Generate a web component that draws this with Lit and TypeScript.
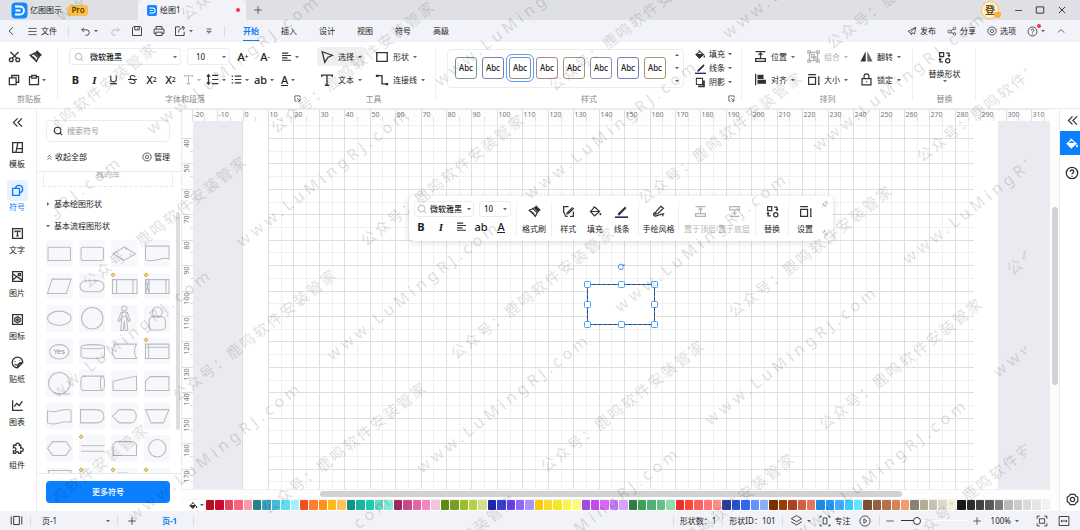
import { LitElement, html, svg, css, TemplateResult, SVGTemplateResult } from "lit";
import { customElement, property } from "lit/decorators.js";
import { classMap } from "lit/directives/class-map.js";
import { styleMap } from "lit/directives/style-map.js";

/* ---------- icons (16 x 16 box, stroked with currentColor) ---------- */
const ICONS: Record<string, SVGTemplateResult> = {
  back: svg`<path d="M10.500 3 5.500 8l5 5"/>`,
  up: svg`<path d="M3 10.500 8 5.500l5 5"/>`,
  menu: svg`<path d="M2 3.500h12M2 8h12M2 12.500h12"/>`,
  undo: svg`<path d="M5.500 2.500 2.500 5.500l3 3M2.500 5.500h7a4 4 0 0 1 0 8H8"/>`,
  redo: svg`<path d="m10.500 2.500 3 3-3 3M13.500 5.500h-7a4 4 0 0 0 0 8H8"/>`,
  save: svg`<path d="M2 3.500 3.500 2h9L14 3.500V14H2zM5 2v4.500h6V2M9 3.500v1.500"/>`,
  print: svg`<path d="M4 5.500V2h8v3.500M4 11.500H1.500v-6h13v6H12M4 9.500h8V14H4z"/>`,
  export: svg`<path d="M8 2.500H2V14h11.500V9M6 10c0-4 3-6 7-6.500M10.500 1.500 14 3.500l-2 3.200"/>`,
  more: svg`<path d="M3 4h10"/><path d="m4 8.500 4 4 4-4z"/>`,
  publish: svg`<path d="M14 2 1.500 8.500l3.500 2L14 2l-2 11-4-2.500L6.500 14l-.5-3"/>`,
  share: svg`<circle cx="4" cy="9" r="2.500"/><circle cx="12" cy="4" r="2"/><circle cx="12" cy="12.500" r="2"/><path d="m6.300 7.500 4-2.500M6.300 10.300l3.700 1.500"/>`,
  gear: svg`<path d="M5.200 1.800h5.600l1.200 1.800 2.500 1.400v5.600l-2.300 1.600-1.400 2H5.200l-1.300-2-2.400-1.600V5l2.400-1.400z"/><circle cx="8" cy="8" r="2.600"/>`,
  help: svg`<circle cx="8" cy="8" r="6.500"/><path d="M6 6.500c0-2.600 4-2.600 4 0 0 1.500-2 1.500-2 3M8 11v1.300"/>`,
  plus: svg`<path d="M8 2v12M2 8h12"/>`,
  minus: svg`<path d="M2 8h12"/>`,
  close: svg`<path d="m3 3 10 10M13 3 3 13"/>`,
  max: svg`<path d="M2 3h12v10H2z"/>`,
  cut: svg`<circle cx="4" cy="12" r="2.300"/><circle cx="12" cy="12" r="2.300"/><path d="M3 2.500 10.800 10M13 2.500 5.200 10"/>`,
  brush: svg`<path d="M10 1.500 14.500 6l-3 1-2.500-2.500z" fill="currentColor"/><path d="M1.500 6.500 6 4.500l5.500 5L9 14c-1.500-2-5-5-7.500-7.500zM6 4.500l3-1.500 4.500 4-2 2.500"/><path d="m4 8 4 3.500"/>`,
  copy: svg`<path d="M1.800 5.200h9v9h-9zM5 5V2h9.200v9H11"/>`,
  paste: svg`<path d="M5 3.500H2v10.700h12V3.500h-3M5 2h6v3.500H5z"/>`,
  search: svg`<circle cx="7.300" cy="7.300" r="5.300"/><path d="m11.300 11.300 3.200 3.200"/>`,
  underline: svg`<path d="M4 2v5.500a4 4 0 0 0 8 0V2M3 14h10"/>`,
  strike: svg`<path d="M12 4.500C11 1.500 4.500 1.500 4.500 5c0 4 7.500 2 7.500 6 0 4-7.500 3.500-8.300.3M1.500 8h13"/>`,
  align: svg`<path d="M1.500 3h9M1.500 6.500h13M1.500 10h8M1.500 13.500h13"/>`,
  spacing: svg`<path d="M3 2v12M1 4.500 3 2l2 2.500M1 11.500 3 14l2-2.500M7.500 3H15M7.500 8H15M7.500 13H15"/>`,
  list: svg`<path d="M1 3h2M1 8h2M1 13h2M5.500 3H15M5.500 8H15M5.500 13H15"/>`,
  select: svg`<path d="M2.500 2 14 6 9 8.500 5.500 14z"/>`,
  type: svg`<path d="M2 4.500V2.500h12v2M8 2.500v11.500M5.500 14h5"/>`,
  rect: svg`<path d="M2 3h12v10H2z"/>`,
  connector: svg`<path d="M3 3h5v9.500h5"/><path d="M1 2h3v2.500H1zM12 11.500h3V14h-3z" fill="currentColor" stroke="none"/>`,
  bucket: svg`<path d="M5.500 2 12 8l-5.500 5L1.500 8 7.500 3"/><path d="M2 8h10l-5.500 5z" fill="currentColor"/><path d="M13.500 9.500v3" stroke-width="2"/>`,
  bucketLine: svg`<path d="M6 1.500v2L1.800 8l5 5.500L13 8 7 2.500M2 8h10"/><path d="M14 10v2.500" stroke-width="2"/>`,
  pen: svg`<path d="M4 11 13 2.500M3.500 11.500l1.500.5 8.500-8.500"/><path d="M0 15h16" stroke="#232c6b" stroke-width="2"/>`,
  shadow: svg`<path d="M2 2h9v9H2z"/><path d="M13 5v8.500H4.500" stroke-width="2.600"/>`,
  position: svg`<path d="M2 2h12M8 4v6M5.500 6 8 3.800 10.500 6M2 10.500h12V14H2z"/>`,
  toBottom: svg`<path d="M2 2h12v4H2zM8 6v5M5.500 9 8 11.500 10.500 9M2 14h12"/>`,
  alignLeft: svg`<path d="M2 1v14"/><path d="M5 3h6v3.500H5zM5 9h9v3.500H5z" fill="currentColor"/>`,
  group: svg`<path d="M3 3h10v10H3z"/><path d="M1 1h3v3H1zM12 1h3v3h-3zM1 12h3v3H1zM12 12h3v3h-3z"/><path d="M5.500 5.500h3.500V9H5.500zM8 8h3v3H8z"/>`,
  size: svg`<path d="M2 5.500h8.500V14H2zM1.500 2h9.500M13.500 5h2M13.500 14h2M14.500 5v9"/>`,
  flip: svg`<path d="M7 1.500V14H.500z" fill="currentColor" stroke="none"/><path d="M9 1.500V14h6.500z" fill="currentColor" fill-opacity=".75" stroke="none"/>`,
  lock: svg`<path d="M2.500 7h11v7.500h-11zM5 7V4a3 3 0 0 1 6 0v3M8 10v1.500"/>`,
  replace: svg`<path d="M2 2h5v5H2z"/><circle cx="12" cy="12" r="2.600"/><path d="M10 2.500h3.500V6M12 5l1.500 1.500L15 5M6 13.500H2.500V10M4 11 2.500 9.500 1 11"/>`,
  collapse: svg`<path d="M8 3 3 8l5 5M13.500 3l-5 5 5 5"/>`,
  foldUp: svg`<path d="m3.500 7.500 4.500-4.500 4.500 4.500M3.500 13 8 8.500l4.500 4.500"/>`,
  template: svg`<path d="M2 2h12v12H2zM8.500 2 6 14M7 9.500h7"/>`,
  symbol: svg`<path d="M2 5.500h8.500V14H2z"/><path d="M5.500 5a4.500 4.500 0 1 1 5.500 5.500"/>`,
  text: svg`<path d="M2 2h12v12H2z"/><path d="M5 6.500V5h6v1.500M8 5v6M6.500 11h3"/>`,
  image: svg`<path d="M2 2h12v12H2zM2.500 5 13.500 12.500M2.500 12l4-3.500"/><path d="M9 4.500h2.500V7H9z"/>`,
  iconset: svg`<path d="M2 2h12v12H2z"/><path d="m8 4.500 3.300 2v3.500L8 12l-3.300-2V6.500z"/><circle cx="8" cy="8.200" r="1"/>`,
  sticker: svg`<path d="M14.500 8A6.500 6.500 0 1 0 8 14.500zM14.500 8c-4 0-6.500 2-6.500 6.500M5 6.500v.8M10.500 5.500v.8M4.500 10c1 1 2 1 3 .8"/>`,
  chart: svg`<path d="M2 1.500V14h12.500M4 9.500 7 5.500l3 2.500 4-5"/>`,
  puzzle: svg`<path d="M3 4h3a2.200 2.200 0 1 1 4.300 0H12v3.500a2.200 2.200 0 1 1 0 4V14H9.500a2 2 0 0 0-4 0H3v-3a2.200 2.200 0 1 0 0-4z"/>`,
  styleEdit: svg`<path d="M8 2H2v7c2 0 1 5 3 5h2M13 3 6.500 9.500 6 11l2-.5L14.500 4M14 8v6h-4"/>`,
  sketch: svg`<path d="M11 1.500 14 4 7.500 10.500l-3.500 1 1-3.500zM3.500 9C1 11 1.500 14 5 13.500c3-.5 6-2.500 9-2.500-1 1-1 2-.5 3"/>`,
  pin: svg`<path d="M9.500 2 14 6.500l-1.500.5-3 3-.5 3L3.500 7.500l3-.5 3-3zM6 10.500 2 14.500"/>`,
  shrink: svg`<path d="M7 1.500V6H2.500M9.500 14.500V10H14"/>`,
  launcher: svg`<path d="M14 6V2H2v12h4M7 7l6.500 6.500M13.500 8v6H8"/>`,
  layers: svg`<path d="m8 2 6.500 3.800L8 9.500 1.500 5.800zM1.500 9.500 8 13.500l6.500-4"/>`,
  focus: svg`<path d="M1.500 4V1.500H4M12 1.500h2.500V4M14.500 12v2.500H12M4 14.500H1.500V12M5.500 4h5v8h-5z"/>`,
  play: svg`<circle cx="8" cy="8" r="6.800"/><path d="m6.500 5 4 3-4 3z"/>`,
  fit: svg`<path d="M1.500 5V1.500H5M11 1.500h3.500V5M14.500 11v3.500H11M5 14.500H1.500V11M4.500 5h7v6h-7z"/>`,
  width: svg`<path d="M1.500 2h13v12h-13zM4 8h8M5.500 6.500 4 8l1.500 1.500M10.500 6.500 12 8l-1.500 1.500"/>`,
  pages: svg`<path d="M4.500 3h7v10h-7zM1.500 3v10M14.500 3v10"/>`,
  rotate: svg`<path d="M13 9.500A5.300 5.300 0 1 1 12.500 5M14 2v4h-4"/>`,
};

const icon = (name: string, size = 12, weight = 1.5) => html`<svg class="icon" width=${size} height=${size}
  viewBox="0 0 16 16" fill="none" stroke="currentColor" stroke-width=${weight} aria-hidden="true">${ICONS[name]}</svg>`;
const caret = () => html`<svg class="caret" width="4" height="4" viewBox="0 0 4 4" aria-hidden="true"><path d="M0 1h4L2 3.200z" fill="currentColor"/></svg>`;

/* ---------- data ---------- */
const SWATCHES = (
  "b01020 cc0a2f ea4560 f7647d f99bab 28808f 38a3bd 42bfdf 60dcf0 a3f0ff f24f21 ff7f32 ff931a ffb916 ffc35a " +
  "129280 17b59c 1cccb2 66d9c8 84ecda 9c2a5c c74a8a e465a8 fa83c5 f2c3de 5f8a12 76a024 9abf22 b5d144 d0e08e " +
  "2028a8 3a40d5 6c42f0 9168fb ab92fa fbc900 fadb2c efe926 faf54a fbfb80 9b4ddb c24cea d568f5 c77dfb daa2ff " +
  "2e7d43 3aa254 50b075 64bf88 92d9ab e8322b ff4438 fb5f60 ff7575 ff8b83 2a41a0 2d52cc 3367f0 6590ff 86aff7 " +
  "7c3000 9a3d00 ab4225 d06040 e47558 1a8cdd 2597f5 40acff 38cbfd 66e4ff 7c4e36 965e42 b5704d d6835b f59a6c " +
  "8b8276 b3ad98 c5c3b0 dddac8 f3eedb 191919 2d2d2d 424242 585858 7b7b7b bababa cbcbcb dadada e6e6e6 f2f2f2"
).split(" ");

const PRESETS = ["#6f9a94", "#7583ab", "#8a8a94", "#a9868c", "#a3967a", "#8791ab", "#7c7fae", "#a8916c"];

const NAV: [string, string][] = [
  ["template", "模板"], ["symbol", "符号"], ["text", "文字"], ["image", "图片"],
  ["iconset", "图标"], ["sticker", "贴纸"], ["chart", "图表"], ["puzzle", "组件"],
];

interface Shape { art: SVGTemplateResult; mark?: boolean; name: string; }
const SHAPES: Shape[] = [
  { name: "流程", art: svg`<path d="M2 7h22v13H2z"/>` },
  { name: "替代流程", art: svg`<rect x="2" y="7" width="22" height="13" rx="2"/>` },
  { name: "判定", art: svg`<path d="M2 13.500 13 7l11 6.500L13 20z"/>` },
  { name: "文档", art: svg`<path d="M1.500 6h23v12.500c-8-3-13 4.500-23 1z"/>` },
  { name: "数据", art: svg`<path d="M6 6h18.500L20 20H1.500z"/>` },
  { name: "终结符", art: svg`<rect x="1" y="7.500" width="23.500" height="11" rx="5.500"/>` },
  { name: "子流程", mark: true, art: svg`<path d="M1.500 6.500h24V20h-24zM5.500 6.500V20M21.500 6.500V20"/>` },
  { name: "外部流程", mark: true, art: svg`<path d="M1.500 6.500h23V20h-23zM5 6.500V20M21.500 6.500V20M1.500 6.500 5 20M5 6.500 1.500 20"/>` },
  { name: "椭圆", art: svg`<ellipse cx="13" cy="13" rx="11.500" ry="7"/>` },
  { name: "圆", art: svg`<circle cx="13" cy="13" r="10.500"/>` },
  { name: "人员", art: svg`<circle cx="13" cy="3.500" r="2.500"/><path d="M10 7h6l3 8.500-1.500.5-2.300-5 1.300 14h-2.500L13 16l-1 9H9.500l1.300-14-2.300 5-1.500-.5zM11 7v4.500h4V7"/>` },
  { name: "用户", art: svg`<circle cx="13" cy="7" r="5"/><rect x="5" y="11.500" width="16" height="13" rx="4"/>` },
  { name: "是", art: svg`<ellipse cx="13" cy="13.500" rx="9.500" ry="7"/><text x="13" y="16" class="yes">Yes</text>` },
  { name: "数据库", art: svg`<path d="M2 8.500v9c0 3.500 23 3.500 23 0v-9"/><ellipse cx="13.500" cy="8.500" rx="11.500" ry="2"/>` },
  { name: "存储数据", art: svg`<path d="M4 6h21c-2.500 4-2.500 10 0 14H4C.500 16 .500 10 4 6z"/>` },
  { name: "内部存储", mark: true, art: svg`<path d="M1.500 6h23v14h-23zM1.500 9h23M4.500 6v14"/>` },
  { name: "顺序数据", art: svg`<circle cx="13" cy="13" r="10.500"/><path d="M13 23.500h10.500"/>` },
  { name: "直接数据", art: svg`<path d="M23 6H4c-3 0-3 14 0 14h19"/><ellipse cx="23" cy="13" rx="2" ry="7"/>` },
  { name: "手动输入", art: svg`<path d="M2 11 25 6v14H2z"/>` },
  { name: "卡片", art: svg`<path d="M6 6.500h18.500V20h-23v-9z"/>` },
  { name: "纸带", art: svg`<path d="M1.500 7.500c8 4 14-3.500 23-.5v12c-9-3-15 4.500-23 .5z"/>` },
  { name: "延迟", art: svg`<path d="M1.500 6.500H17c10 0 10 13 0 13H1.500z"/>` },
  { name: "显示", art: svg`<path d="M8 6.500h11.500c7 0 7 13 0 13H8L1.500 13z"/>` },
  { name: "手动操作", art: svg`<path d="M1.500 6.500h23L19 19.500H7z"/>` },
  { name: "准备", art: svg`<path d="M6.500 6.500h13L24.500 13l-5 7h-13l-5-7z"/>` },
  { name: "并行模式", mark: true, art: svg`<path d="M2 10.500h23M2 16h23"/>` },
  { name: "循环限值", art: svg`<path d="M5 6.500h17l3 3V20H2V9.500z"/>` },
  { name: "连接", art: svg`<circle cx="13" cy="13" r="8.500"/>` },
  { name: "页面引用", art: svg`<path d="M2.500 2.500h22V20h-22z"/>` },
  { name: "箭头", mark: true, art: svg`<path d="M6 8h14"/>` },
  { name: "批注", mark: true, art: svg`<path d="M7 5h9M11 8h8"/>` },
  { name: "注释", mark: true, art: svg`<path d="M6 8h12"/>` },
];

/* ---------- drawing canvas with rulers ---------- */
const STEP = 25.44;
const ORIGIN = 62;
const FIRST_ROW = 29.4;

@customElement("draw-canvas")
export class DrawCanvas extends LitElement {
  static styles = css`
    :host { display: block; overflow: hidden; background: #fdfdfd; }
    .surface { display: block; width: 100%; height: 100%; }
    .num { font: 7px "Noto Sans", "Noto Sans CJK SC", sans-serif; fill: #777; }
    .tick, .grid { shape-rendering: crispEdges; stroke-width: 1; }
    .tick { stroke: #dedede; }
    .minor { stroke: #f0f0f0; }
    .major { stroke: #dfdfdf; }
  `;

  private snap(v: number) { return Math.round(v - 0.5) + 0.5; }

  private gridLines() {
    const left = ORIGIN + STEP, right = 793, out: SVGTemplateResult[] = [];
    for (const major of [false, true]) {
      const cls = major ? "grid major" : "grid minor";
      const shift = major ? 0 : STEP / 2;
      for (let i = 0; i < 28; i++) {
        const x = this.snap(left + i * STEP + shift);
        if (x <= right) out.push(svg`<line class=${cls} x1=${x} x2=${x} y1="12" y2="380"/>`);
      }
      for (let i = -1; i < 14; i++) {
        const y = this.snap(FIRST_ROW + i * STEP + shift);
        if (y > 12) out.push(svg`<line class=${cls} x1=${left} x2=${right} y1=${y} y2=${y}/>`);
      }
    }
    return out;
  }

  private rulers() {
    const out: SVGTemplateResult[] = [];
    for (let n = -20; n <= 310; n += 10) {
      const x = ORIGIN + (n / 10) * STEP, a = this.snap(x), b = this.snap(x + STEP / 2);
      out.push(svg`<line class="tick" x1=${a} x2=${a} y1="1" y2="12"/><line class="tick" x1=${b} x2=${b} y1="8" y2="12"/>
        <text class="num" x=${a + 1} y="8">${n}</text>`);
    }
    for (let n = 40; n <= 170; n += 10) {
      const y = FIRST_ROW + ((n - 40) / 10) * STEP, a = this.snap(y), b = this.snap(y + STEP / 2);
      const half = n > 90 ? 6 : 4;
      out.push(svg`<line class="tick" x1="1" x2="12" y1=${a} y2=${a}/><line class="tick" x1="9" x2="12" y1=${b} y2=${b}/>
        <text class="num" text-anchor="middle" transform="translate(8 ${a + half + 1}) rotate(-90)">${n}</text>`);
    }
    return out;
  }

  private selection() {
    const x0 = 406.5, x1 = 473.5, y0 = 175.5, y1 = 215.5, mx = 440.5, my = 195.5;
    const pts = [[x0, y0], [mx, y0], [x1, y0], [x0, my], [x1, my], [x0, y1], [mx, y1], [x1, y1]];
    return svg`
      <rect x=${x0} y=${y0} width=${x1 - x0} height=${y1 - y0} fill="#fff" stroke="#2e86e8"/>
      <rect x=${x0} y=${y0} width=${x1 - x0} height=${y1 - y0} fill="none" stroke="#33405c" stroke-dasharray="3 2"/>
      <g transform="translate(436 154) scale(.5)" fill="none" stroke="#2b8cf5" stroke-width="2">${ICONS.rotate}</g>
      ${pts.map(([x, y]) => svg`<rect x=${x - 3} y=${y - 3} width="6" height="6" rx="1" fill="#fff" stroke="#4a9ff9"/>`)}`;
  }

  render() {
    return html`<svg class="surface" role="img" aria-label="绘图1">
      <rect x="12" y="12" width="100%" height="100%" fill="#ebeaf0"/>
      <rect x=${ORIGIN} y="12" width="755" height="100%" fill="#fff"/>
      <path d="M61.500 12v368" stroke="#dddde4"/>
      ${this.gridLines()}
      <path d="M0 0h870v12H0z" fill="#fdfdfd"/>
      ${this.rulers()}
      <path d="M0 .5h870M.5 0v400" stroke="#ececec"/>
      ${this.selection()}
    </svg>`;
  }
}

/* ---------- diagonal watermark ---------- */
@customElement("water-mark")
export class WaterMark extends LitElement {
  static styles = css`
    :host { display: block; pointer-events: none; overflow: hidden; }
    .sheet { display: block; width: 100%; height: 100%; }
    .latin, .han { fill: #000; fill-opacity: 0.12; font-family: "Noto Sans", "Noto Sans CJK SC", sans-serif; font-weight: 500; }
    .latin { font-size: 16px; letter-spacing: 4px; }
    .han { font-size: 15px; letter-spacing: 2px; }
  `;
  private row(cls: string, text: string, x: number, y: number, bx: number, by: number) {
    const out: SVGTemplateResult[] = [];
    for (let i = -2; i < 5; i++) for (let j = -3; j < 8; j++) {
      const px = Math.round(x + i * bx + j * 90), py = Math.round(y + i * by + j * 113);
      if (px > -150 && px < 965 && py > 10 && py < 640)
        out.push(svg`<text class=${cls} transform="translate(${px} ${py}) rotate(-38)">${text}</text>`);
    }
    return out;
  }
  render() {
    return html`<svg class="sheet" aria-hidden="true">
      ${this.row("latin", "www.LuMingRJ.com", 188, 248, 288, -48)}
      ${this.row("han", "公众号：鹿鸣软件安装管家", 222, 134, 278, -42)}
    </svg>`;
  }
}

/* ---------- symbol tile ---------- */
@customElement("symbol-tile")
export class SymbolTile extends LitElement {
  @property({ attribute: false }) shape!: Shape;
  static styles = css`
    :host { display: block; aspect-ratio: 1; }
    .tile { display: block; width: 100%; height: 100%; padding: 0; border: 0; border-radius: 3px; background: #f7f8fb; }
    .art { display: block; width: 100%; height: 100%; overflow: visible; fill: none; stroke: #b9bbc0; stroke-width: 1; }
    .yes { font: 7px "Noto Sans", sans-serif; fill: #8b8e94; stroke: none; text-anchor: middle; }
  `;
  render() {
    return html`<button class="tile" aria-label=${this.shape.name}>
      <svg class="art" viewBox="0 0 26 26">${this.shape.art}
        ${this.shape.mark ? svg`<path d="m2-.200 2 2-2 2-2-2z" fill="#ffd84d" stroke="#a8923c" stroke-width=".7"/>` : ""}
      </svg></button>`;
  }
}

/* ---------- application ---------- */
@customElement("app-root")
export class AppRoot extends LitElement {
  static styles = css`
    :host {
      position: relative; display: flex; flex-direction: column; height: 100vh; overflow: hidden;
      font: 8px/10px "Noto Sans", "Noto Sans CJK SC", sans-serif; color: #222; background: #fff;
    }
    * { box-sizing: border-box; }
    button, select, input { font: inherit; color: inherit; margin: 0; padding: 0; border: 0; background: none; outline: 0; }
    button { display: inline-flex; align-items: center; justify-content: center; white-space: nowrap; }
    select { appearance: none; }
    a { color: inherit; text-decoration: none; }
    svg { flex: none; display: block; }
    .icon { color: #333; }
    .caret { color: #666; }
    .off, .off .icon, .off .caret { color: #b5b5b5; }
    .sep { flex: none; width: 1px; height: 11px; background: #dcdde2; }
    .grow { flex: 1; }

    .title { flex: none; display: flex; height: 20px; background: #dfe0e5; padding-left: 11px; align-items: center; }
    .name { font-size: 8px; margin: 0 6px 0 2px; }
    .pro { width: 20px; height: 11px; border-radius: 3px; background: #fcbf43; font-weight: 600; color: #5b3b06; text-align: center; }
    .doc { align-self: stretch; display: flex; align-items: center; gap: 3px; width: 108px; margin-left: 50px; padding: 0 6px 0 9px; background: #f2f3f8; border-radius: 4px 4px 0 0; }
    .dot { width: 4px; height: 4px; border-radius: 50%; background: #f5363f; }
    .newtab { width: 24px; }
    .avatar { position: relative; width: 18px; height: 18px; border-radius: 50%; background: #fff3cf; border: 1px solid #f3c666; color: #6b4a12; font-size: 10px; font-weight: 700; margin-right: 8px; }
    .gem { position: absolute; right: -3px; bottom: 0; width: 7px; height: 6px; background: #fbb03b; border-radius: 1px 1px 4px 4px; }
    .win { width: 22px; }
    .wins { display: flex; margin-right: 7px; }

    .menu { flex: none; display: flex; align-items: center; height: 22px; background: #f2f3f8; padding: 0 14px 0 5px; }
    .file { gap: 3px; margin: 0 11px 0 10px; }
    .quick { display: flex; align-items: center; height: 100%; padding-left: 11px; }
    .quick button { width: 22px; }
    .quick .wide { width: 24px; justify-content: flex-start; gap: 3px; }
    .quick .out { margin-left: 4px; }
    .after { margin-left: 4px; }
    .tabs { display: flex; gap: 22px; margin-left: 18px; align-self: stretch; }
    .tab { position: relative; display: flex; align-items: center; }
    .tab.on { color: #0a7cff; font-weight: 700; }
    .tab.on::after { content: ""; position: absolute; left: 0; right: 0; bottom: 1px; height: 1px; background: #0a7cff; }
    .side { display: flex; align-items: center; gap: 11px; }
    .side button { gap: 3px; }
    .alert { position: relative; }
    .alert::after { content: ""; position: absolute; left: 10px; top: -2px; width: 4px; height: 4px; border-radius: 50%; background: #f5363f; }

    .ribbon { flex: none; display: flex; height: 67px; border-bottom: 1px solid #ededf0; background: #fff; }
    .group { position: relative; display: grid; grid-template-rows: 19px 19px 11px; row-gap: 4px; padding-top: 5px; align-content: start; }
    .group::after { content: ""; position: absolute; right: 0; top: 6px; bottom: 8px; width: 1px; background: #efeff2; }
    .group.plain::after { display: none; }
    .row { display: flex; align-items: center; }
    .caption { display: grid; grid-template-columns: 1fr auto 1fr; align-items: center; color: #8a8a8a; }
    .caption .txt { grid-column: 2; }
    .caption button { justify-self: end; }
    .clip { width: 58px; }
    .clip .row { padding-left: 8px; gap: 8px; }
    .clip button { gap: 2px; }
    .font { width: 253px; }
    .font .row { padding-left: 8px; }
    .font .row.boxes { padding-left: 11px; }
    .font .caption { padding: 0 10px 0 11px; }
    .b19 { width: 19px; height: 19px; }
    .b22 { width: 22px; height: 19px; }
    .b24 { width: 24px; height: 19px; gap: 3px; }
    .gapleft { margin-left: 2px; }
    .glyph { font-size: 11px; line-height: 14px; color: #222; font-weight: 500; }
    .bold { font-weight: 700; }
    .ital { font-family: "Liberation Serif", serif; font-style: italic; font-weight: 700; }
    .sub { font-size: 7px; }
    .under { border-bottom: 1px solid #222; line-height: 11px; }
    .field { position: relative; display: flex; align-items: center; height: 17px; border: 1px solid #ececef; border-radius: 3px; padding: 0 3px; gap: 4px; background: #fff; }
    .field select { flex: 1; min-width: 0; height: 100%; }
    .field .icon { color: #999; }
    .f112 { width: 112px; margin-right: 6px; padding-left: 4px; gap: 6px; font-weight: 500; }
    .f43 { width: 43px; padding-left: 8px; }

    .tb { height: 19px; padding: 0 3px; gap: 4px; border-radius: 3px; justify-content: flex-start; }
    .tb.on { background: #efeff0; }
    .tools { width: 125px; }
    .tools .row { padding-left: 6px; gap: 7px; }
    .style { width: 306px; grid-template-rows: 42px 11px; }
    .stylebody { display: flex; padding-left: 11px; align-items: center; }
    .gallery { display: flex; align-items: center; gap: 5px; width: 237px; height: 39px; border: 1px solid #ececef; border-radius: 4px; padding: 0 4px 0 7px; }
    .preset { width: 22px; height: 22px; border: 1px solid; border-radius: 3px; color: #222; background: #fff; font-weight: 500; }
    .preset.on { outline: 1px solid #4da3ff; outline-offset: 2px; }
    .updown { display: flex; flex-direction: column; gap: 9px; margin-left: auto; }
    .flipped { transform: rotate(180deg); }
    .inks { display: flex; flex-direction: column; margin-left: 11px; }
    .inks button { height: 14px; gap: 3px; }
    .style .caption { padding-right: 7px; padding-left: 7px; }
    .arrange { width: 171px; }
    .arrange .row { display: grid; grid-template-columns: 53px 53px 52px; padding-left: 9px; }
    .swap { width: 63px; grid-template-rows: 42px 11px; }
    .swapbtn { flex-direction: column; gap: 5px; padding-top: 4px; justify-content: flex-start; }
    .swapbtn .caret { margin-top: -5px; }

    .body { flex: 1; min-height: 0; display: flex; }
    .nav { flex: none; width: 37px; border-right: 1px solid #ececef; display: flex; flex-direction: column; padding-right: 2px; }
    .fold { height: 26px; margin-bottom: 2px; }
    .navitem { flex-direction: column; gap: 1px; margin-bottom: 11px; }
    .navicon { display: flex; align-items: center; justify-content: center; width: 21px; height: 21px; border-radius: 3px; }
    .navitem.on { color: #0a7cff; }
    .navitem.on .icon { color: #0a7cff; }
    .navitem.on .navicon { background: #e6f2ff; }

    .panel { flex: none; width: 144px; display: flex; flex-direction: column; }
    .find { display: flex; align-items: center; gap: 4px; height: 22px; margin: 11px 11px 0 9px; padding: 0 6px; border: 1px solid #ececef; border-radius: 4px; }
    .find input { flex: 1; min-width: 0; }
    .find input::placeholder { color: #999; opacity: 1; }
    .bar { display: flex; justify-content: space-between; height: 30px; padding: 0 11px 0 9px; border-bottom: 1px solid #e9e9ec; }
    .bar button { gap: 2px; padding-top: 1px; }
    .list { position: relative; flex: 1; min-height: 0; overflow: hidden; padding: 0 11px 0 9px; }
    .mine { height: 15px; margin: 0 -3px; border: 1px dashed #e6e6e9; border-top: 0; color: #aaa; text-align: center; line-height: 4px; }
    .cat { display: flex; width: 100%; justify-content: flex-start; gap: 4px; height: 22px; }
    .cats { padding-top: 6px; }
    .right { transform: rotate(-90deg); }
    .tiles { display: grid; grid-template-columns: repeat(4, 1fr); gap: 6px; padding-top: 3px; }
    .thumb { position: absolute; right: 1px; top: 40px; width: 4px; height: 218px; border-radius: 2px; background: #dcdde0; }
    .foot { border-top: 1px solid #e9e9ec; padding: 7px 11px 8px 9px; }
    .primary { width: 100%; height: 22px; border-radius: 4px; background: #0a80ff; color: #fff; font-weight: 500; }

    .stage { flex: 1; min-width: 0; display: grid; grid-template: 1fr 10px 12px / 1fr 10px; position: relative; }
    .vbar { position: relative; background: #fdfdfd; border-right: 1px solid #ececef; grid-row: 1 / 4; grid-column: 2; }
    .vthumb { position: absolute; left: 2px; top: 98px; height: 178px; width: 6px; border-radius: 3px; background: #d0d2d4; }
    .hbar { border-top: 1px solid #f0f0f0; position: relative; background: #fdfdfd; }
    .hthumb { position: absolute; left: 16%; width: 67%; top: 1px; height: 6px; border-radius: 3px; background: #d0d2d4; }
    .colors { display: flex; align-items: flex-start; gap: 1px; padding-left: 8px; border-top: 1px solid #f2f2f2; }
    .colors .pick { width: 16px; height: 10px; gap: 2px; justify-content: flex-start; }
    .swatch { flex: 1; height: 10px; border-radius: 1px; }

    .float { position: absolute; left: 228px; top: 87px; display: flex; width: 424px; height: 45px; border-radius: 5px; background: #fff; box-shadow: 0 1px 6px rgba(0, 0, 0, 0.16); }
    .fleft { width: 107px; padding: 5px 0 0 5px; }
    .fboxes { display: flex; gap: 5px; height: 16px; }
    .fboxes .field { height: 16px; gap: 3px; padding: 0 2px; font-weight: 500; }
    .fboxes .f32 { padding-left: 4px; padding-right: 3px; }
    .f60 { width: 60px; }
    .f32 { width: 32px; }
    .fmarks { display: flex; margin-left: -3px; }
    .fmarks button { width: 20px; height: 19px; }
    .fcell { display: flex; justify-content: center; border-left: 1px solid #f0f0f2; height: 34px; margin-top: 6px; }
    .fcell button { flex: 1; flex-direction: column; gap: 6px; justify-content: flex-start; padding-top: 3px; }
    .w35 { width: 35px; } .w87 { width: 87px; padding: 0 3px; } .w40 { width: 40px; } .w77 { width: 77px; padding: 0 4px; } .w33 { width: 33px; }
    .ftail { flex: 1; display: flex; flex-direction: column; justify-content: space-between; align-items: center; padding: 4px 4px 4px 0; }
    .ftail .icon { color: #999; }

    .rail { flex: none; width: 20px; display: flex; flex-direction: column; }
    .rail button { padding-left: 4px; height: 24px; }
    .rail .open { height: 22px; }
    .rail .hot { background: #0a80ff; }
    .rail .hot .icon { color: #fff; }
    .rail .q { margin-top: 6px; }

    .status { flex: none; display: flex; align-items: center; height: 19px; background: #f2f3f8; padding: 0 10px; }
    .pagesel { position: relative; display: flex; align-items: center; width: 86px; padding: 0 7px 0 11px; }
    .pagesel select { flex: 1; }
    .first { margin-left: 7px; }
    .addp { width: 28px; }
    .curr { color: #0a7cff; font-weight: 700; margin: 0 16px; }
    .info { padding: 0 6px; white-space: nowrap; }
    .modes { display: flex; align-items: center; gap: 8px; padding: 0 8px 0 7px; }
    .modes button { gap: 4px; }
    .zoom { display: flex; align-items: center; padding-left: 5px; }
    .zoom input { appearance: none; width: 66px; height: 8px; margin: 0 5px 0 6px; background: linear-gradient(#333, #333) left center / 16px 1px no-repeat, linear-gradient(#fff, #fff) center / 100% 1px no-repeat; }
    .zoom input::-webkit-slider-thumb { appearance: none; width: 8px; height: 8px; border: 1px solid #333; border-radius: 50%; background: #fff; }
    .pct { margin-left: 9px; gap: 4px; }
    .views { display: flex; gap: 10px; margin-left: 17px; }

    .mark { position: absolute; inset: 0 5%; }
  `;

  private cmd(name: string, label: string, cls = "", size = 14): TemplateResult {
    return html`<button class="tb ${cls}">${icon(name, size)}<span>${label}</span>${caret()}</button>`;
  }

  private titleBar() {
    return html`<header class="title">
      <svg width="17" height="17" viewBox="0 0 17 17"><rect x=".5" y=".5" width="16" height="16" rx="4" fill="#1388ff"/><path d="M4 4.500h5a4 4 0 0 1 0 8H4M4.500 8.500h5" fill="none" stroke="#fff" stroke-width="1.800"/></svg>
      <span class="name">亿图图示</span><span class="pro">Pro</span>
      <div class="doc">
        <svg width="10" height="11" viewBox="0 0 10 11"><rect width="10" height="11" rx="2" fill="#1388ff"/><path d="M2.500 3h3a2.400 2.400 0 0 1 0 5h-3M3 5.500h3" fill="none" stroke="#fff" stroke-width="1.100"/></svg>
        <span>绘图1</span><span class="grow"></span><span class="dot"></span>
      </div>
      <button class="newtab" aria-label="新建">${icon("plus", 10, 1.2)}</button>
      <span class="grow"></span>
      <button class="avatar">登<span class="gem"></span></button>
      <div class="wins">
        <button class="win" aria-label="最小化">${icon("minus", 9)}</button>
        <button class="win" aria-label="最大化">${icon("max", 10)}</button>
        <button class="win" aria-label="关闭">${icon("close", 10)}</button>
      </div>
    </header>`;
  }

  private menuBar() {
    const tabs = ["开始", "插入", "设计", "视图", "符号", "高级"];
    return html`<nav class="menu">
      <button aria-label="返回">${icon("back", 12, 1.2)}</button>
      <button class="file">${icon("menu", 11, 1.1)}<span>文件</span></button>
      <span class="sep"></span>
      <div class="quick">
        <button class="wide" aria-label="撤销">${icon("undo", 11, 1.3)}${caret()}</button>
        <button class="off" aria-label="重做">${icon("redo", 11, 1.3)}</button>
        <button aria-label="保存">${icon("save", 12, 1.2)}</button>
        <button aria-label="打印">${icon("print", 12, 1.2)}</button>
        <button class="wide out" aria-label="导出">${icon("export", 12, 1.2)}${caret()}</button>
        <button aria-label="更多">${icon("more", 8, 1.5)}</button>
      </div>
      <span class="sep after"></span>
      <div class="tabs">${tabs.map((t, i) => html`<a href="#" class=${classMap({ tab: true, on: i === 0 })}>${t}</a>`)}</div>
      <span class="grow"></span>
      <div class="side">
        <button>${icon("publish", 10, 1.2)}发布</button>
        <button>${icon("share", 10, 1.2)}分享</button>
        <button>${icon("gear", 10, 1.2)}选项</button>
        <button class="alert" aria-label="帮助">${icon("help", 11, 1.2)}${caret()}</button>
        <button aria-label="收起功能区">${icon("up", 10, 1.2)}</button>
      </div>
    </nav>`;
  }

  private ribbon() {
    return html`<section class="ribbon">
      <div class="group clip">
        <div class="row"><button aria-label="剪切">${icon("cut", 13, 1.7)}</button><button aria-label="格式刷">${icon("brush", 13, 1.7)}</button></div>
        <div class="row"><button aria-label="复制">${icon("copy", 12, 1.7)}</button><button aria-label="粘贴">${icon("paste", 12, 1.7)}${caret()}</button></div>
        <div class="caption"><span class="txt">剪贴板</span></div>
      </div>
      <div class="group font plain">
        <div class="row boxes">
          <label class="field f112">${icon("search", 10, 1.2)}<select aria-label="字体"><option>微软雅黑</option></select>${caret()}</label>
          <label class="field f43"><select aria-label="字号"><option>10</option></select>${caret()}</label>
          <button class="b22 glyph gapleft">A<sup class="sub">+</sup></button><button class="b22 glyph">A<sup class="sub">-</sup></button>
          <button class="b24 gapleft" aria-label="对齐">${icon("align", 11, 1.7)}${caret()}</button>
        </div>
        <div class="row">
          <button class="b19 glyph bold">B</button><button class="b19 glyph ital">I</button>
          <button class="b19" aria-label="下划线">${icon("underline", 11, 1.6)}</button><button class="b19" aria-label="删除线">${icon("strike", 11, 1.5)}</button>
          <button class="b19 glyph">X<sup class="sub">2</sup></button><button class="b19 glyph">X<sub class="sub">2</sub></button>
          <button class="b24 off" aria-label="文字方向">${icon("type", 11)}${caret()}</button>
          <button class="b24" aria-label="行距">${icon("spacing", 13)}${caret()}</button>
          <button class="b24" aria-label="列表">${icon("list", 11, 1.7)}${caret()}</button>
          <button class="b24"><span class="glyph">ab</span>${caret()}</button>
          <button class="b24"><span class="glyph under">A</span>${caret()}</button>
        </div>
        <div class="caption"><span class="txt">字体和段落</span><button aria-label="字体设置">${icon("launcher", 7, 1.6)}</button></div>
      </div>
      <div class="group tools">
        <div class="row">${this.cmd("select", "选择", "on")}${this.cmd("rect", "形状")}</div>
        <div class="row">${this.cmd("type", "文本")}${this.cmd("connector", "连接线")}</div>
        <div class="caption"><span class="txt">工具</span></div>
      </div>
      <div class="group style">
        <div class="stylebody">
          <div class="gallery">
            ${PRESETS.map((c, i) => html`<button class=${classMap({ preset: true, on: i === 2 })} style=${styleMap({ borderColor: c })}>Abc</button>`)}
            <div class="updown"><span class="flipped">${caret()}</span><span>${caret()}</span><span>${caret()}</span></div>
          </div>
          <div class="inks">
            <button>${icon("bucket", 11)}填充${caret()}</button>
            <button>${icon("pen", 11)}线条${caret()}</button>
            <button>${icon("shadow", 11)}阴影${caret()}</button>
          </div>
        </div>
        <div class="caption"><span class="txt">样式</span><button aria-label="样式设置">${icon("launcher", 7, 1.6)}</button></div>
      </div>
      <div class="group arrange">
        <div class="row">${this.cmd("position", "位置", "", 13)}${this.cmd("group", "组合", "off", 13)}${this.cmd("flip", "翻转", "", 13)}</div>
        <div class="row">${this.cmd("alignLeft", "对齐", "", 13)}${this.cmd("size", "大小", "", 13)}${this.cmd("lock", "锁定", "", 13)}</div>
        <div class="caption"><span class="txt">排列</span></div>
      </div>
      <div class="group swap">
        <button class="swapbtn">${icon("replace", 13)}<span>替换形状</span>${caret()}</button>
        <div class="caption"><span class="txt">替换</span></div>
      </div>
    </section>`;
  }

  private floatBar() {
    const cell = (n: string, t: string, cls = "") => html`<button class=${cls}>${icon(n, 13, 1.5)}<span>${t}</span></button>`;
    return html`<div class="float">
      <div class="fleft">
        <div class="fboxes">
          <label class="field f60">${icon("search", 10, 1.1)}<select aria-label="字体"><option>微软雅黑</option></select>${caret()}</label>
          <label class="field f32"><select aria-label="字号"><option>10</option></select>${caret()}</label>
        </div>
        <div class="fmarks">
          <button class="glyph bold">B</button><button class="glyph ital">I</button>
          <button aria-label="对齐">${icon("align", 11, 1.7)}</button><button class="glyph">ab</button>
          <button><span class="glyph under">A</span></button>
        </div>
      </div>
      <div class="fcell w35">${cell("brush", "格式刷")}</div>
      <div class="fcell w87">${cell("styleEdit", "样式")}${cell("bucketLine", "填充")}${cell("pen", "线条")}</div>
      <div class="fcell w40">${cell("sketch", "手绘风格")}</div>
      <div class="fcell w77">${cell("position", "置于顶层", "off")}${cell("toBottom", "置于底层", "off")}</div>
      <div class="fcell w33">${cell("replace", "替换")}</div>
      <div class="fcell w33">${cell("size", "设置")}</div>
      <div class="ftail">${icon("pin", 8, 1.4)}${icon("shrink", 8, 1.4)}</div>
    </div>`;
  }

  render() {
    return html`
      ${this.titleBar()}${this.menuBar()}${this.ribbon()}
      <main class="body">
        <nav class="nav">
          <button class="fold" aria-label="收起">${icon("collapse", 13)}</button>
          ${NAV.map(([n, t], i) => html`<button class=${classMap({ navitem: true, on: i === 1 })}>
            <span class="navicon">${icon(n, 13, 1.6)}</span><span>${t}</span></button>`)}
        </nav>
        <aside class="panel">
          <label class="find">${icon("search", 10, 1.8)}<input type="text" placeholder="搜索符号" aria-label="搜索符号"></label>
          <div class="bar"><button>${icon("foldUp", 7, 1.6)}收起全部</button><button>${icon("gear", 10, 1.2)}管理</button></div>
          <div class="list">
            <div class="mine">我的库</div>
            <div class="cats">
              <button class="cat"><span class="right">${caret()}</span>基本绘图形状</button>
              <button class="cat"><span>${caret()}</span>基本流程图形状</button>
            </div>
            <div class="tiles">${SHAPES.map((s) => html`<symbol-tile .shape=${s}></symbol-tile>`)}</div>
            <span class="thumb"></span>
          </div>
          <div class="foot"><button class="primary">更多符号</button></div>
        </aside>
        <section class="stage">
          <draw-canvas></draw-canvas>
          <div class="vbar"><span class="vthumb"></span></div>
          <div class="hbar"><span class="hthumb"></span></div>
          <div class="colors">
            <button class="pick" aria-label="填充颜色">${icon("bucket", 9)}${caret()}</button>
            ${SWATCHES.map((c) => html`<button class="swatch" aria-label="#${c}" style=${styleMap({ background: "#" + c })}></button>`)}
          </div>
          ${this.floatBar()}
        </section>
        <nav class="rail">
          <button class="open" aria-label="展开">${icon("collapse", 13)}</button>
          <button class="hot" aria-label="填充">${icon("bucket", 13)}</button>
          <button class="q" aria-label="帮助">${icon("help", 14)}</button>
          <span class="grow"></span>
          <button aria-label="设置">${icon("gear", 13, 1.5)}</button>
        </nav>
      </main>
      <footer class="status">
        <button aria-label="页面列表">${icon("pages", 13, 1.2)}</button>
        <span class="sep first"></span>
        <label class="pagesel"><select aria-label="页面"><option>页-1</option></select>${caret()}</label>
        <span class="sep"></span>
        <button class="addp" aria-label="添加页面">${icon("plus", 10, 1.3)}</button>
        <a class="curr" href="#">页-1</a>
        <span class="sep"></span>
        <span class="grow"></span>
        <span class="sep"></span><span class="info">形状数：1</span>
        <span class="sep"></span><span class="info">形状ID：101</span>
        <span class="sep"></span>
        <div class="modes">
          <button aria-label="图层">${icon("layers", 13, 1.1)}${caret()}</button>
          <button>${icon("focus", 12, 1.2)}专注</button>
          <button aria-label="播放">${icon("play", 12, 1.1)}</button>
        </div>
        <span class="sep"></span>
        <div class="zoom">
          <button aria-label="缩小">${icon("minus", 10, 1.2)}</button>
          <input type="range" min="0" max="100" value="22" aria-label="缩放">
          <button aria-label="放大">${icon("plus", 10, 1.2)}</button>
          <button class="pct">100%${caret()}</button>
        </div>
        <div class="views">
          <button aria-label="适应页面">${icon("fit", 12, 1.2)}</button>
          <button aria-label="适应宽度">${icon("width", 12, 1.2)}</button>
        </div>
      </footer>
      <water-mark class="mark"></water-mark>`;
  }
}
